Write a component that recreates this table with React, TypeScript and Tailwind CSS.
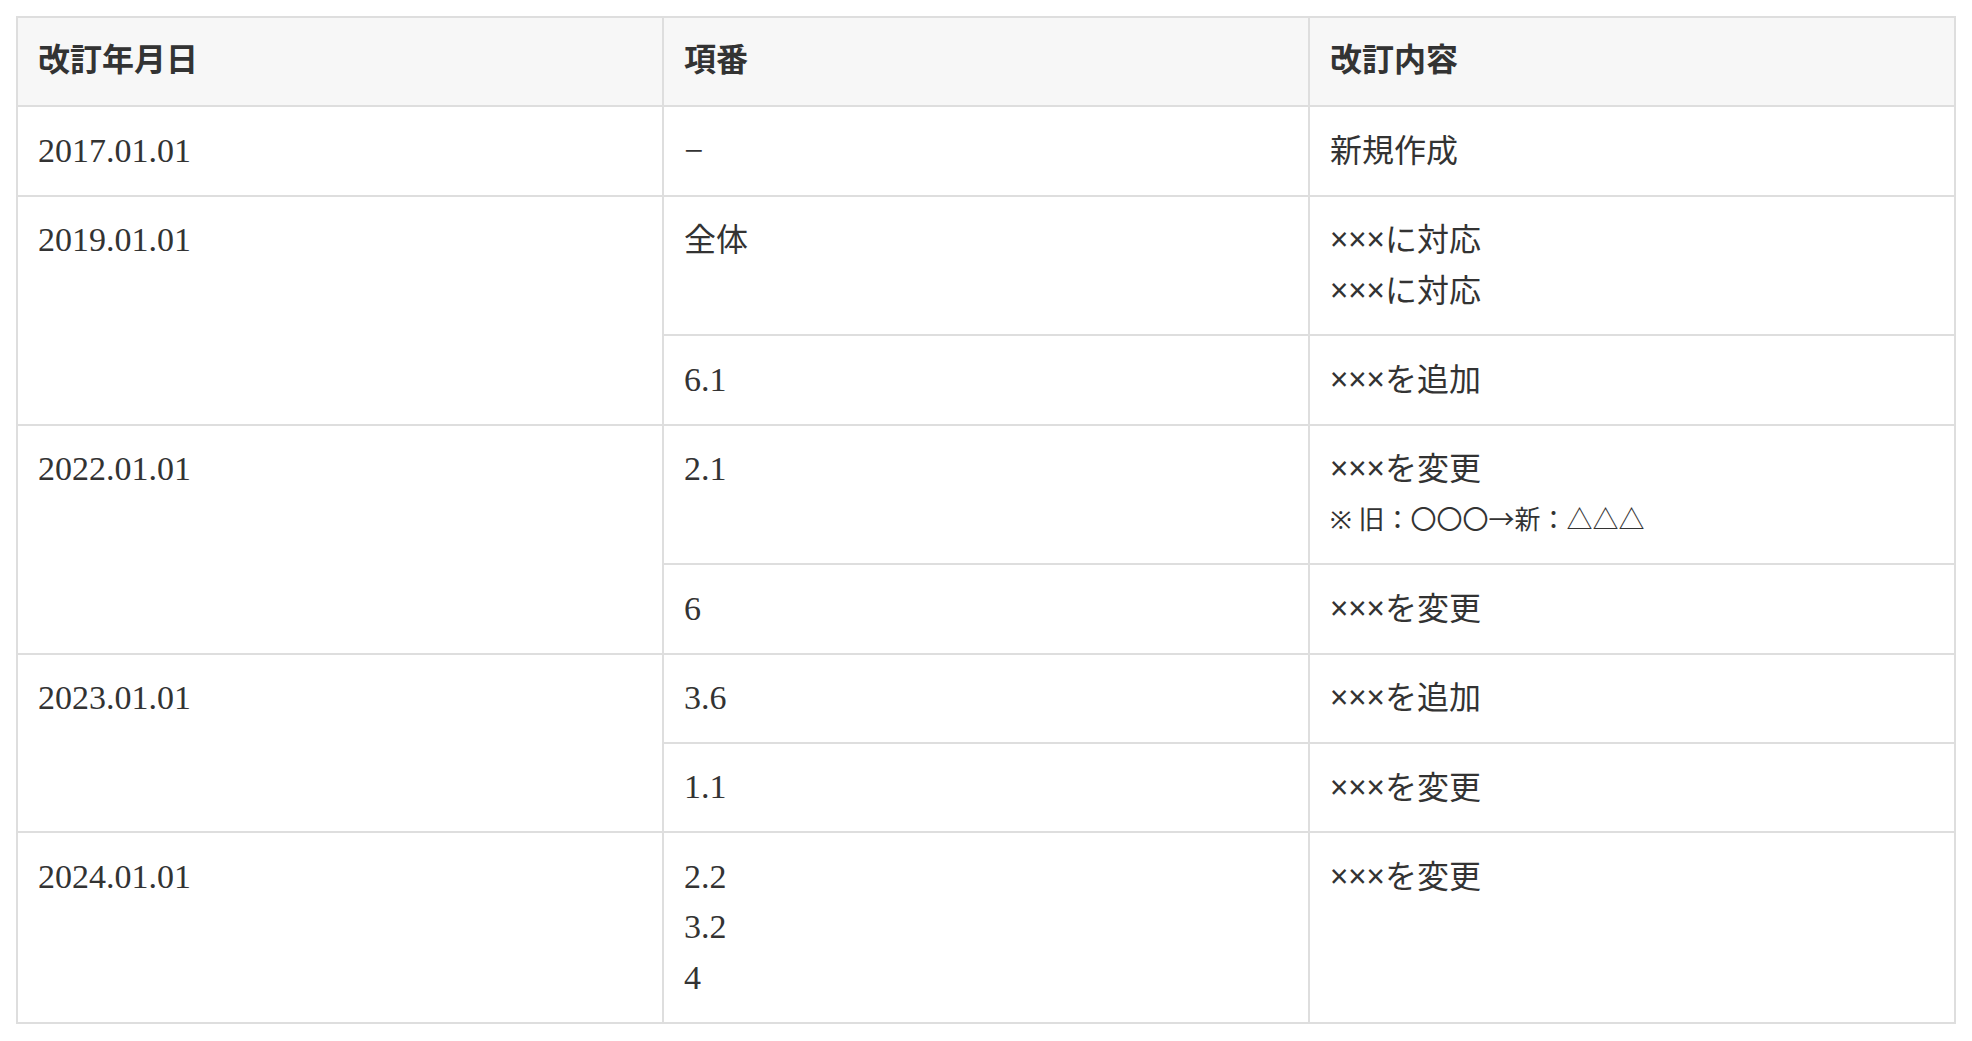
type Row = {
    date?: string;
    span?: number;
    items: string[];
    contents: string[];
    note?: string;
};

const rows: Row[] = [
    { date: '2017.01.01', span: 1, items: ['−'], contents: ['新規作成'] },
    { date: '2019.01.01', span: 2, items: ['全体'], contents: ['×××に対応', '×××に対応'] },
    { items: ['6.1'], contents: ['×××を追加'] },
    { date: '2022.01.01', span: 2, items: ['2.1'], contents: ['×××を変更'], note: '※ 旧：〇〇〇→新：△△△' },
    { items: ['6'], contents: ['×××を変更'] },
    { date: '2023.01.01', span: 2, items: ['3.6'], contents: ['×××を追加'] },
    { items: ['1.1'], contents: ['×××を変更'] },
    { date: '2024.01.01', span: 1, items: ['2.2', '3.2', '4'], contents: ['×××を変更'] },
];

const border = 'border-2 border-[#dedede] px-5 align-top text-left';
const numCell = `${border} py-[18.4px] text-[34px] font-['Liberation_Serif','Noto_Sans_CJK_JP',serif]`;
const jpFont = "text-[32px] font-['Noto_Sans','Noto_Sans_CJK_JP',sans-serif]";
// CJK glyphs sit a little low in the line box, nudge them up
const headCell = `${border} pt-[15.6px] pb-[21.2px] ${jpFont} font-bold`;
const jpCell = `${border} pt-[17.6px] pb-[19.2px] ${jpFont}`;

export default function App() {
    return (
        <div className="p-4 bg-white min-h-screen">
            <table className="w-full table-fixed border-collapse text-[#333] leading-[50.5px]">
                <thead>
                    <tr className="bg-[#f7f7f7]">
                        {['改訂年月日', '項番', '改訂内容'].map(h => (
                            <th key={h} className={headCell}>
                                {h}
                            </th>
                        ))}
                    </tr>
                </thead>
                <tbody>
                    {rows.map((row, i) => (
                        <tr key={i}>
                            {row.date && (
                                <td rowSpan={row.span} className={numCell}>
                                    {row.date}
                                </td>
                            )}
                            <td className={/^[0-9.−]+$/.test(row.items[0]) ? numCell : jpCell}>
                                {row.items.map(item => (
                                    <div key={item}>{item}</div>
                                ))}
                            </td>
                            <td className={jpCell}>
                                {row.contents.map((c, j) => (
                                    <div key={j}>{c}</div>
                                ))}
                                {row.note && <div className="text-[26px]">{row.note}</div>}
                            </td>
                        </tr>
                    ))}
                </tbody>
            </table>
        </div>
    );
}
